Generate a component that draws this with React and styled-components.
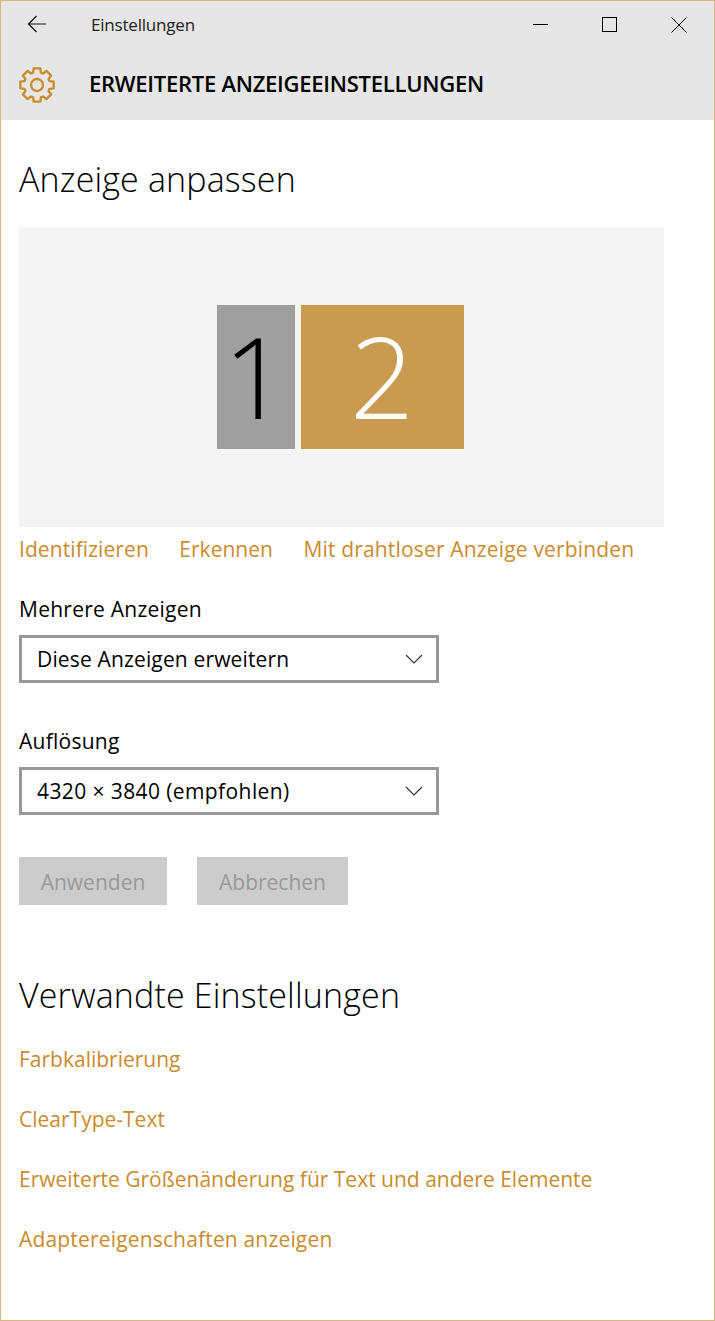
import React from 'react';
import styled, { createGlobalStyle } from 'styled-components';

const accent = '#ca8b2c';

const GlobalStyle = createGlobalStyle`
  html, body {
    margin: 0;
    padding: 0;
    background: #fff;
  }
  body {
    font-family: "Open Sans", "Noto Sans", "Liberation Sans", sans-serif;
    color: #000;
  }
`;

const Window = styled.div`
  box-sizing: border-box;
  width: 715px;
  height: 1321px;
  border: 1px solid #dcb67f;
  background: #fff;
  overflow: hidden;
`;

const Header = styled.header`
  height: 119px;
  background: #e6e6e6;
`;

const TitleBar = styled.div`
  display: flex;
  align-items: center;
  height: 48px;
`;

const BackButton = styled.button`
  display: flex;
  align-items: center;
  justify-content: center;
  width: 72px;
  height: 48px;
  padding: 0 0 3px 0;
  border: 0;
  background: none;
`;

const AppName = styled.span`
  flex: 1;
  margin-left: 18px;
  margin-top: -1px;
  font-size: 17px;
  letter-spacing: -0.2px;
  color: #222;
`;

const WinControls = styled.div`
  display: flex;
  padding-right: 1px;
`;

const WinButton = styled.button`
  display: flex;
  align-items: center;
  justify-content: center;
  width: 69px;
  height: 48px;
  padding: 0 0 1px 0;
  border: 0;
  background: none;
`;

const PageBar = styled.div`
  display: flex;
  align-items: center;
  height: 71px;
  padding: 0 0 2px 18px;
  gap: 34px;
`;

const PageTitle = styled.h1`
  margin: 0 0 4px;
  font-size: 22px;
  font-weight: 600;
  letter-spacing: -0.26px;
`;

const Content = styled.main`
  padding: 0 18px;
`;

const SectionTitle = styled.h2`
  margin: ${(p) => p.$top}px 0 0;
  font-size: 34px;
  line-height: 44px;
  font-weight: 300;
  letter-spacing: 0.15px;
`;

const Arrangement = styled.div`
  display: flex;
  justify-content: center;
  align-items: center;
  gap: 6px;
  width: 645px;
  height: 300px;
  margin-top: 26px;
  padding-right: 3px;
  box-sizing: border-box;
  background: #f4f4f4;
`;

const Monitor = styled.div`
  display: flex;
  align-items: center;
  justify-content: center;
  box-sizing: border-box;
  width: ${(p) => p.$width}px;
  height: 144px;
  padding-bottom: 3px;
  background: ${(p) => (p.$active ? '#c99b50' : '#9f9f9f')};
  color: ${(p) => (p.$active ? '#fff' : '#000')};
  font-weight: 300;
  font-size: 113px;
  line-height: 1;
`;

const LinkRow = styled.div`
  display: flex;
  gap: 30.5px;
  margin-top: 7px;
`;

const TextLink = styled.a`
  display: block;
  font-size: 21px;
  line-height: 30px;
  letter-spacing: ${(p) => p.$spacing || 0}px;
  color: ${accent};
  white-space: nowrap;
`;

const FieldLabel = styled.div`
  font-size: 21px;
  line-height: 30px;
  letter-spacing: 0.25px;
  margin-top: ${(p) => p.$top}px;
`;

const Select = styled.div`
  display: flex;
  align-items: center;
  justify-content: space-between;
  box-sizing: border-box;
  width: 420px;
  height: 48px;
  margin-top: 11px;
  padding: 0 13px 0 15px;
  border: 3px solid #999;
  font-size: 21px;
  letter-spacing: ${(p) => p.$spacing}px;
`;

const ButtonRow = styled.div`
  display: flex;
  gap: 30px;
  margin-top: 42px;
`;

const DisabledButton = styled.button`
  width: ${(p) => p.$width}px;
  height: 48px;
  padding: 1px 0 0;
  border: 0;
  background: #ccc;
  color: #999;
  font-family: inherit;
  font-size: 21px;
`;

const RelatedList = styled.nav`
  display: flex;
  flex-direction: column;
  gap: 30px;
  margin-top: 27px;
`;

const Chevron = () => (
  <svg width="18" height="10" viewBox="0 0 18 10" fill="none" stroke="#333" strokeWidth="1.1">
    <path d="M1 1l8 8 8-8" />
  </svg>
);

// eight blunt teeth round the hub
const gearPath = () => {
  const c = 18;
  const pts = [];
  for (let i = 0; i < 8; i++) {
    const a = (i * Math.PI) / 4;
    const at = (r, d) => `${(c + r * Math.sin(a + d)).toFixed(2)} ${(c - r * Math.cos(a + d)).toFixed(2)}`;
    pts.push(at(13, -0.3), at(17, -0.2), at(17, 0.2), at(13, 0.3));
  }
  return `M${pts.join('L')}Z`;
};

const Gear = () => (
  <svg width="36" height="36" viewBox="0 0 36 36" fill="none" stroke={accent} strokeWidth="2.3" strokeLinejoin="round">
    <path d={gearPath()} />
    <circle cx="18" cy="18" r="6" />
  </svg>
);

const App = () => {
  return (
    <>
      <GlobalStyle />
      <Window>
        <Header>
          <TitleBar>
            <BackButton>
              <svg width="20" height="18" viewBox="0 0 20 18" fill="none" stroke="#111" strokeWidth="1.2">
                <path d="M19 9H1.5M9.5 1L1.5 9l8 8" />
              </svg>
            </BackButton>
            <AppName>Einstellungen</AppName>
            <WinControls>
              <WinButton>
                <svg width="15" height="15" viewBox="0 0 15 15" stroke="#000" fill="none">
                  <path d="M0 7.5h15" />
                </svg>
              </WinButton>
              <WinButton>
                <svg width="15" height="15" viewBox="0 0 15 15" stroke="#000" fill="none">
                  <rect x="0.5" y="0.5" width="14" height="14" />
                </svg>
              </WinButton>
              <WinButton>
                <svg width="16" height="16" viewBox="0 0 16 16" stroke="#000" fill="none">
                  <path d="M.5.5l15 15M15.5.5l-15 15" />
                </svg>
              </WinButton>
            </WinControls>
          </TitleBar>
          <PageBar>
            <Gear />
            <PageTitle>ERWEITERTE ANZEIGEEINSTELLUNGEN</PageTitle>
          </PageBar>
        </Header>
        <Content>
          <SectionTitle $top={37}>Anzeige anpassen</SectionTitle>
          <Arrangement>
            <Monitor $width={78}>1</Monitor>
            <Monitor $width={163} $active>2</Monitor>
          </Arrangement>
          <LinkRow>
            <TextLink $spacing={0.08}>Identifizieren</TextLink>
            <TextLink>Erkennen</TextLink>
            <TextLink $spacing={0.17}>Mit drahtloser Anzeige verbinden</TextLink>
          </LinkRow>
          <FieldLabel $top={30}>Mehrere Anzeigen</FieldLabel>
          <Select $spacing={0.15}>
            Diese Anzeigen erweitern
            <Chevron />
          </Select>
          <FieldLabel $top={43}>Auflösung</FieldLabel>
          <Select $spacing={0.4}>
            4320 × 3840 (empfohlen)
            <Chevron />
          </Select>
          <ButtonRow>
            <DisabledButton $width={148}>Anwenden</DisabledButton>
            <DisabledButton $width={151}>Abbrechen</DisabledButton>
          </ButtonRow>
          <SectionTitle $top={68}>Verwandte Einstellungen</SectionTitle>
          <RelatedList>
            <TextLink>Farbkalibrierung</TextLink>
            <TextLink>ClearType-Text</TextLink>
            <TextLink>Erweiterte Größenänderung für Text und andere Elemente</TextLink>
            <TextLink $spacing={0.17}>Adaptereigenschaften anzeigen</TextLink>
          </RelatedList>
        </Content>
      </Window>
    </>
  );
};

export default App;
